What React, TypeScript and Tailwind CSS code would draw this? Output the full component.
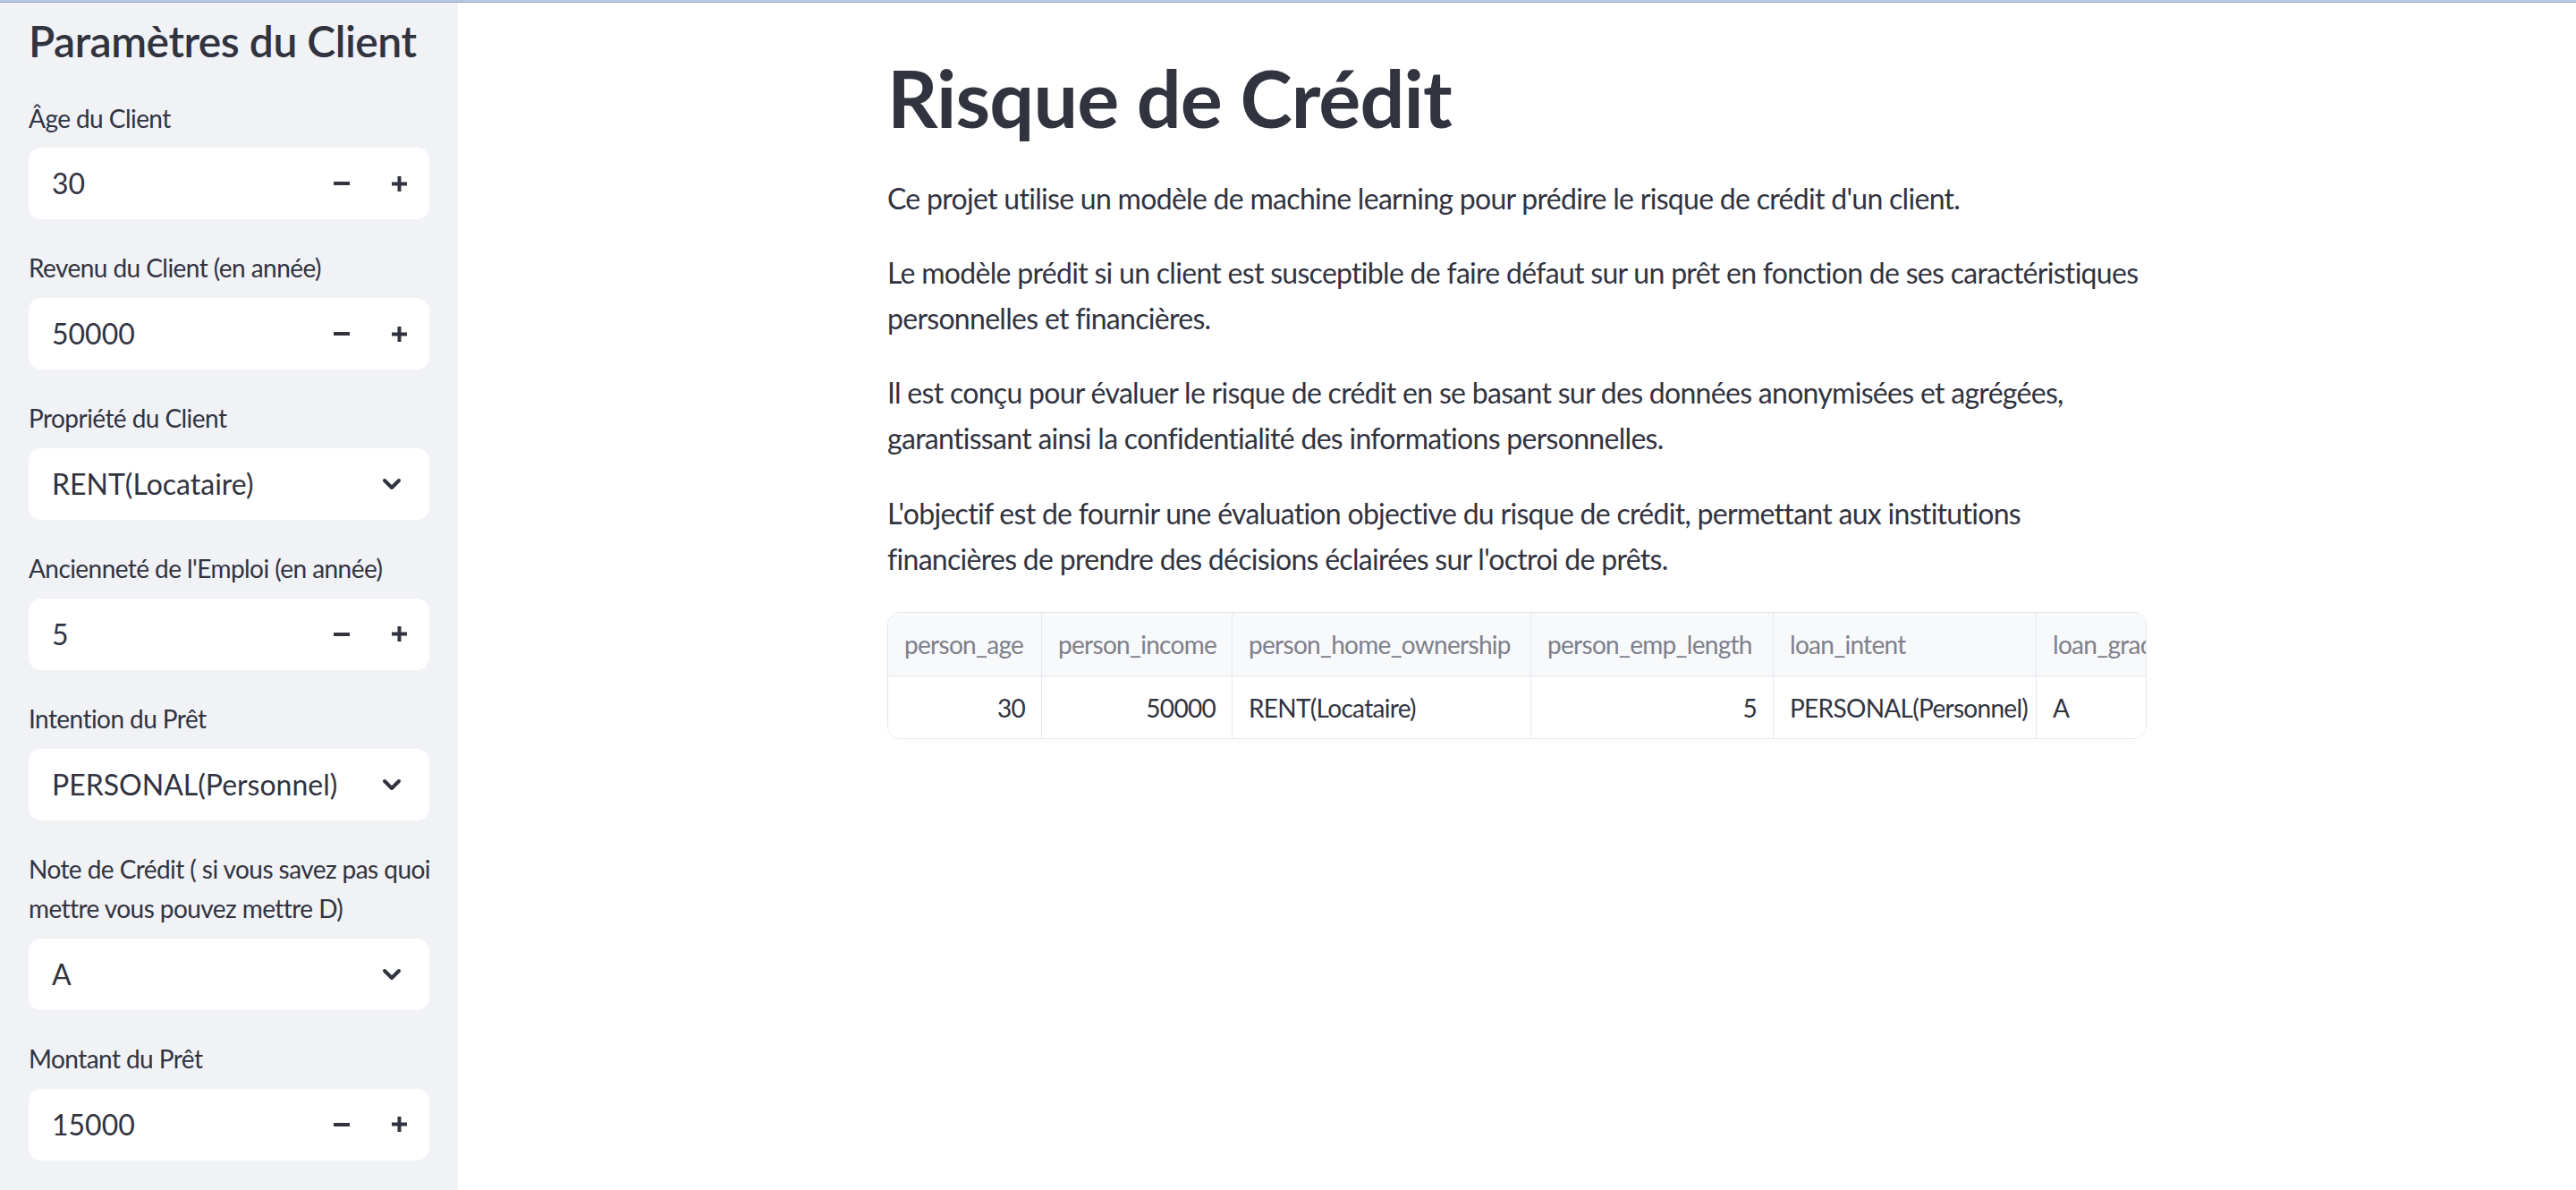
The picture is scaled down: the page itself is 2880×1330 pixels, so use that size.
import React from "react";

function MinusIcon() {
  return (
    <svg width="18" height="4" viewBox="0 0 18 4">
      <rect x="0" y="0" width="18" height="4" fill="#31333f" />
    </svg>
  );
}

function PlusIcon() {
  return (
    <svg width="17" height="17" viewBox="0 0 17 17">
      <rect x="0" y="6.5" width="17" height="4" fill="#31333f" />
      <rect x="6.5" y="0" width="4" height="17" fill="#31333f" />
    </svg>
  );
}

function Chevron() {
  return (
    <svg width="22" height="14" viewBox="0 0 22 14">
      <polyline
        points="3,3 11,11 19,3"
        fill="none"
        stroke="#31333f"
        strokeWidth="4"
        strokeLinecap="round"
        strokeLinejoin="round"
      />
    </svg>
  );
}

function Label({ children }: { children: React.ReactNode }) {
  return (
    <div className="text-[28px] leading-[44.8px] text-[#31333f] mb-[11px] tracking-[-0.02em] whitespace-nowrap">
      {children}
    </div>
  );
}

function NumberInput({ label, value }: { label: React.ReactNode; value: string }) {
  return (
    <div>
      <Label>{label}</Label>
      <div className="flex items-center h-[80px] bg-white rounded-[14px]">
        <div className="flex-1 pl-[26px] text-[32px] text-[#31333f]">{value}</div>
        <div className="flex h-full pr-[2px]">
          <div className="w-[64px] h-full flex items-center justify-center">
            <MinusIcon />
          </div>
          <div className="w-[64px] h-full flex items-center justify-center">
            <PlusIcon />
          </div>
        </div>
      </div>
    </div>
  );
}

function SelectInput({ label, value }: { label: React.ReactNode; value: string }) {
  return (
    <div>
      <Label>{label}</Label>
      <div className="flex items-center h-[80px] bg-white rounded-[14px]">
        <div className="flex-1 pl-[26px] text-[32px] text-[#31333f]">{value}</div>
        <div className="w-[64px] h-full flex items-center justify-center mr-[10px]">
          <Chevron />
        </div>
      </div>
    </div>
  );
}

const columns = [
  { h: "person_age", v: "30", w: "w-[172px]", right: true },
  { h: "person_income", v: "50000", w: "w-[213px]", right: true },
  { h: "person_home_ownership", v: "RENT(Locataire)", w: "w-[334px]", right: false },
  { h: "person_emp_length", v: "5", w: "w-[271px]", right: true },
  { h: "loan_intent", v: "PERSONAL(Personnel)", w: "w-[294px]", right: false },
  { h: "loan_grade", v: "A", w: "w-[160px]", right: false },
  { h: "loan_amnt", v: "15000", w: "w-[170px]", right: true },
  { h: "loan_int_rate", v: "10", w: "w-[180px]", right: true },
];

export default function App() {
  return (
    <div className="w-[2880px] h-[1330px] overflow-hidden bg-white font-[Lato,sans-serif] text-[#31333f] flex flex-col">
      <div className="h-[2px] w-full bg-[#b7c6e6] shrink-0" />
      <div className="h-[1px] w-full bg-[#9ea8bb] shrink-0" />
      <div className="flex flex-1 min-h-0">
        {/* Sidebar */}
        <aside className="w-[512px] shrink-0 h-full bg-[#f0f2f6] pl-[32px] pr-[32px]">
          <h2 className="text-[48px] font-semibold leading-[57.6px] mt-[14px] mb-[35px] tracking-[-0.01em] text-[#31333f]">
            Paramètres du Client
          </h2>
          <div className="flex flex-col gap-[32px]">
            <NumberInput label="Âge du Client" value="30" />
            <NumberInput label="Revenu du Client (en année)" value="50000" />
            <SelectInput label="Propriété du Client" value="RENT(Locataire)" />
            <NumberInput label="Ancienneté de l'Emploi (en année)" value="5" />
            <SelectInput label="Intention du Prêt" value="PERSONAL(Personnel)" />
            <SelectInput
              label={
                <>
                  Note de Crédit ( si vous savez pas quoi
                  <br />
                  mettre vous pouvez mettre D)
                </>
              }
              value="A"
            />
            <NumberInput label="Montant du Prêt" value="15000" />
          </div>
        </aside>

        {/* Main */}
        <main className="flex-1 h-full flex justify-center">
          <div className="w-[1408px] pt-[54px]">
            <h1 className="text-[88px] font-bold leading-[105.6px] tracking-[-0.01em] text-[#31333f] mb-[33px]">
              Risque de Crédit
            </h1>
            <div className="text-[32px] leading-[51.2px] tracking-[-0.022em] text-[#31333f] flex flex-col gap-[32px]">
              <p className="whitespace-nowrap">
                Ce projet utilise un modèle de machine learning pour prédire le risque de crédit d'un client.
              </p>
              <p className="whitespace-nowrap">
                Le modèle prédit si un client est susceptible de faire défaut sur un prêt en fonction de ses caractéristiques
                <br />
                personnelles et financières.
              </p>
              <p className="whitespace-nowrap">
                Il est conçu pour évaluer le risque de crédit en se basant sur des données anonymisées et agrégées,
                <br />
                garantissant ainsi la confidentialité des informations personnelles.
              </p>
              <p className="whitespace-nowrap">
                L'objectif est de fournir une évaluation objective du risque de crédit, permettant aux institutions
                <br />
                financières de prendre des décisions éclairées sur l'octroi de prêts.
              </p>
            </div>

            <div className="mt-[34px] w-[1408px] border border-[#e5e7ec] rounded-[14px] overflow-hidden">
              <div className="flex bg-[#f8f9fb] border-b border-[#e5e7ec] h-[71px] w-max">
                {columns.map((c) => (
                  <div
                    key={c.h}
                    className={`${c.w} shrink-0 h-full flex items-center px-[18px] border-r border-[#e5e7ec] text-[28px] text-[#7d808b] tracking-[-0.025em] whitespace-nowrap overflow-hidden`}
                  >
                    {c.h}
                  </div>
                ))}
              </div>
              <div className="flex bg-white h-[69px] w-max">
                {columns.map((c) => (
                  <div
                    key={c.h}
                    className={`${c.w} shrink-0 h-full flex items-center px-[18px] border-r border-[#e5e7ec] text-[28px] text-[#31333f] tracking-[-0.025em] whitespace-nowrap ${
                      c.right ? "justify-end" : "justify-start"
                    }`}
                  >
                    {c.v}
                  </div>
                ))}
              </div>
            </div>
          </div>
        </main>
      </div>
    </div>
  );
}
